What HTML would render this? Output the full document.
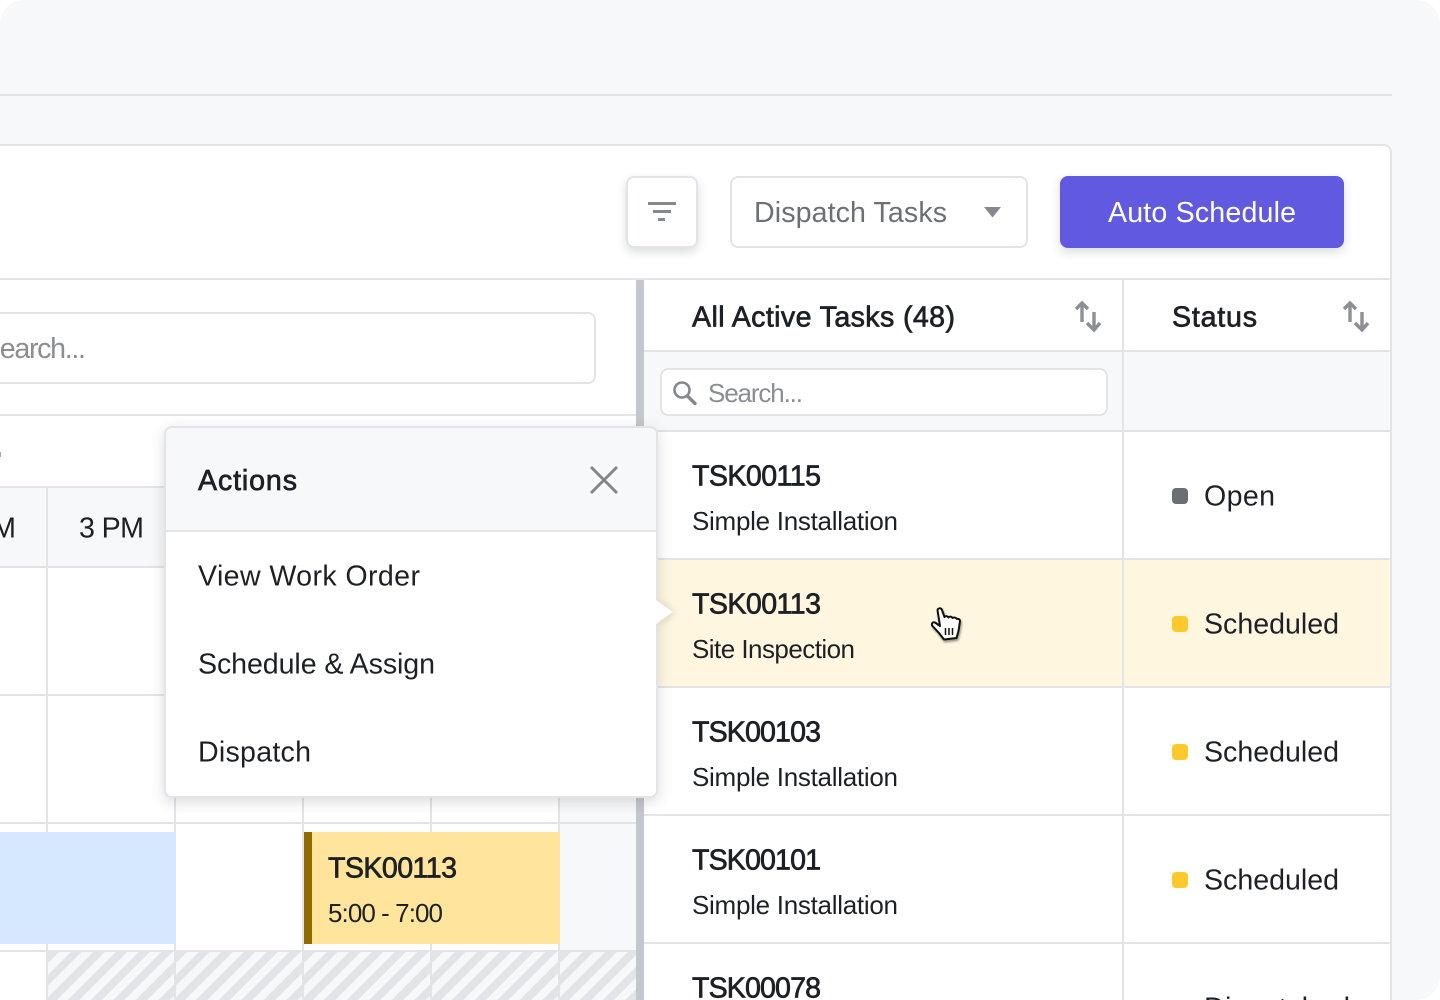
<!DOCTYPE html>
<html><head><meta charset="utf-8"><style>
html,body{margin:0;padding:0;background:#fff}
#p{position:relative;width:1440px;height:1000px;overflow:hidden;background:#f7f8fa;border-radius:24px;font-family:"Liberation Sans",sans-serif}
.r{position:absolute;display:block}
.l{background:#e3e4e8}
svg{position:absolute;left:0;top:0}
text{font-family:"Liberation Sans",sans-serif;font-size:28.6px;fill:#1d2126}
.s{stroke:#1d2126;stroke-width:.7px}
.m{font-size:26px}
.g{fill:#6b7076}
.h{fill:#8a8e93}
.hatch{background:repeating-linear-gradient(135deg,#e3e4e8 0 8px,#f7f8fa 8px 16px);top:952px;height:48px}
</style></head><body><div id="p">
<div class="r l" style="left:0;top:94px;width:1392px;height:2px"></div>
<div class="r" style="left:-20px;top:144px;width:1412px;height:900px;box-sizing:border-box;background:#fff;border:2px solid #e3e4e8;border-radius:8px"></div>

<div class="r" style="left:626px;top:176px;width:72px;height:72px;box-sizing:border-box;background:#fff;border:2px solid #e3e4e8;border-radius:8px;box-shadow:0 4px 10px rgba(30,35,45,.16)"></div>
<div class="r" style="left:648px;top:202px;width:28px;height:3px;background:#85898e"></div>
<div class="r" style="left:653px;top:210px;width:18px;height:3px;background:#85898e"></div>
<div class="r" style="left:658px;top:218px;width:7px;height:3px;background:#85898e"></div>
<div class="r" style="left:730px;top:176px;width:298px;height:72px;box-sizing:border-box;background:#fff;border:2px solid #e3e4e8;border-radius:8px"></div>
<div class="r" style="left:1060px;top:176px;width:284px;height:72px;background:#6159e0;border-radius:8px;box-shadow:0 4px 10px rgba(30,35,45,.16)"></div>

<div class="r l" style="left:0;top:278px;width:1392px;height:2px"></div>

<div class="r" style="left:-20px;top:312px;width:616px;height:72px;box-sizing:border-box;border:2px solid #e3e4e8;border-radius:8px;background:#fff"></div>
<div class="r l" style="left:0;top:414px;width:636px;height:2px"></div>
<div class="r" style="left:0;top:488px;width:636px;height:78px;background:#f7f8fa"></div>
<div class="r" style="left:560px;top:568px;width:76px;height:382px;background:#f7f8fa"></div>
<div class="r l" style="left:0;top:486px;width:636px;height:2px"></div>
<div class="r l" style="left:0;top:566px;width:636px;height:2px"></div>
<div class="r l" style="left:0;top:694px;width:636px;height:2px"></div>
<div class="r l" style="left:0;top:822px;width:636px;height:2px"></div>
<div class="r l" style="left:0;top:950px;width:636px;height:2px"></div>
<div class="r l" style="left:46px;top:488px;width:2px;height:512px"></div>
<div class="r l" style="left:174px;top:568px;width:2px;height:432px"></div>
<div class="r l" style="left:302px;top:568px;width:2px;height:432px"></div>
<div class="r l" style="left:430px;top:568px;width:2px;height:432px"></div>
<div class="r l" style="left:558px;top:568px;width:2px;height:432px"></div>
<div class="r hatch" style="left:48px;width:126px"></div>
<div class="r hatch" style="left:176px;width:126px"></div>
<div class="r hatch" style="left:304px;width:126px"></div>
<div class="r hatch" style="left:432px;width:126px"></div>
<div class="r hatch" style="left:560px;width:76px"></div>
<div class="r" style="left:0;top:832px;width:176px;height:112px;background:#d6e8ff"></div>
<div class="r" style="left:304px;top:832px;width:256px;height:112px;background:#ffe49b"></div>
<div class="r" style="left:304px;top:832px;width:8px;height:112px;background:#8f6b00"></div>
<div class="r" style="left:0;top:452px;width:1px;height:5px;background:#a5a8ac"></div>

<div class="r" style="left:636px;top:280px;width:8px;height:720px;background:#c4c7cb"></div>
<div class="r" style="left:644px;top:352px;width:746px;height:78px;background:#f7f8fa"></div>
<div class="r l" style="left:644px;top:350px;width:746px;height:2px"></div>
<div class="r" style="left:660px;top:368px;width:448px;height:48px;box-sizing:border-box;background:#fff;border:2px solid #e3e4e8;border-radius:8px"></div>
<div class="r" style="left:644px;top:560px;width:746px;height:126px;background:#fff6e0"></div>
<div class="r l" style="left:644px;top:430px;width:746px;height:2px"></div>
<div class="r l" style="left:644px;top:558px;width:746px;height:2px"></div>
<div class="r l" style="left:644px;top:686px;width:746px;height:2px"></div>
<div class="r l" style="left:644px;top:814px;width:746px;height:2px"></div>
<div class="r l" style="left:644px;top:942px;width:746px;height:2px"></div>
<div class="r l" style="left:1122px;top:280px;width:2px;height:720px"></div>
<div class="r" style="left:1172px;top:488px;width:16px;height:16px;border-radius:4px;background:#6b6f75"></div>
<div class="r" style="left:1172px;top:616px;width:16px;height:16px;border-radius:4px;background:#ffc92e"></div>
<div class="r" style="left:1172px;top:744px;width:16px;height:16px;border-radius:4px;background:#ffc92e"></div>
<div class="r" style="left:1172px;top:872px;width:16px;height:16px;border-radius:4px;background:#ffc92e"></div>

<div class="r" style="left:164px;top:426px;width:494px;height:372px;box-sizing:border-box;background:#fff;border:2px solid #e3e4e8;border-radius:8px;box-shadow:0 4px 14px rgba(30,35,45,.16)"></div>
<svg width="1440" height="1000" viewBox="0 0 1440 1000" style="filter:drop-shadow(3px 1px 4px rgba(30,35,45,.14))"><path d="M656 600L673 612L656 624Z" fill="#fff"/></svg>
<div class="r" style="left:166px;top:428px;width:490px;height:368px;background:#fff;border-radius:6px"></div>
<div class="r" style="left:166px;top:428px;width:490px;height:102px;background:#f7f8fa;border-radius:6px 6px 0 0"></div>
<div class="r l" style="left:166px;top:530px;width:490px;height:2px"></div>

<svg width="1440" height="1000" viewBox="0 0 1440 1000">
<path d="M984 207H1001L992.500 217.500Z" fill="#85898e"/>
<g fill="none" stroke="#85898e" stroke-width="2.600"><circle cx="682" cy="390" r="7.500"/><path d="M687.500 396L695 403.500" stroke-width="3.400" stroke-linecap="round"/></g>
<g fill="none" stroke="#8c8f94" stroke-width="3.400"><path d="M1082 303V322M1076 309L1082 303L1088 309"/><path d="M1094 312V329M1087 323L1094 330L1100 323"/></g>
<g fill="none" stroke="#8c8f94" stroke-width="3.400"><path d="M1350 303V322M1344 309L1350 303L1356 309"/><path d="M1362 312V329M1355 323L1362 330L1368 323"/></g>
<path d="M591 467L617 493M617 467L591 493" stroke="#808488" stroke-width="2.800" fill="none"/>

<text class="g" x="754" y="222" textLength="193">Dispatch Tasks</text>
<text x="1108" y="222" textLength="188" style="fill:#fff">Auto Schedule</text>
<text class="s" x="692" y="326.500" textLength="263">All Active Tasks (48)</text>
<text class="s" x="1172" y="326.500" textLength="85">Status</text>
<text class="h m" x="708" y="402" textLength="95">Search...</text>
<text class="h" x="-18" y="358" textLength="104">Search...</text>
<text x="-49" y="537.500" textLength="65">2 PM</text>
<text x="79" y="537.500" textLength="65">3 PM</text>

<text class="s" x="198" y="490" textLength="99">Actions</text>
<text x="198" y="585.500" textLength="222">View Work Order</text>
<text x="198" y="673.500" textLength="237">Schedule &amp; Assign</text>
<text x="198" y="761.500" textLength="113">Dispatch</text>

<text class="s" x="328" y="877.500" textLength="129">TSK00113</text>
<text class="m" x="328" y="922" textLength="115">5:00 - 7:00</text>

<text class="s" x="692" y="485.500" textLength="129">TSK00115</text>
<text class="m" x="692" y="530" textLength="206">Simple Installation</text>
<text class="s" x="692" y="613.500" textLength="129">TSK00113</text>
<text class="m" x="692" y="658" textLength="163">Site Inspection</text>
<text class="s" x="692" y="741.500" textLength="129">TSK00103</text>
<text class="m" x="692" y="786" textLength="206">Simple Installation</text>
<text class="s" x="692" y="869.500" textLength="129">TSK00101</text>
<text class="m" x="692" y="914" textLength="206">Simple Installation</text>
<text class="s" x="692" y="997.500" textLength="129">TSK00078</text>

<text x="1204" y="505.500" textLength="71">Open</text>
<text x="1204" y="633.500" textLength="135">Scheduled</text>
<text x="1204" y="761.500" textLength="135">Scheduled</text>
<text x="1204" y="889.500" textLength="135">Scheduled</text>
<text x="1204" y="1017.500" textLength="146">Dispatched</text>

<g style="filter:drop-shadow(1px 2px 1px rgba(0,0,0,.4))">
<path d="M937.500 610C938 608 941 607.500 942 610L944.500 617C945.500 615.500 947.500 616 948.500 617.500C949.500 616 951.500 616.500 952.500 618C953.500 617 956 617.500 957 619C958.500 618.500 960 619.500 960 621L958.500 631L956.500 638L944 639.500L939 633L932.500 626C931 624 932.500 621.500 935 622.500L940 626Z" fill="#fff" stroke="#111" stroke-width="2" stroke-linejoin="round"/>
<path d="M945.500 628V635M949 628V635M952.500 628V635" stroke="#111" stroke-width="1.500" fill="none"/>
</g>
</svg>
</div></body></html>
